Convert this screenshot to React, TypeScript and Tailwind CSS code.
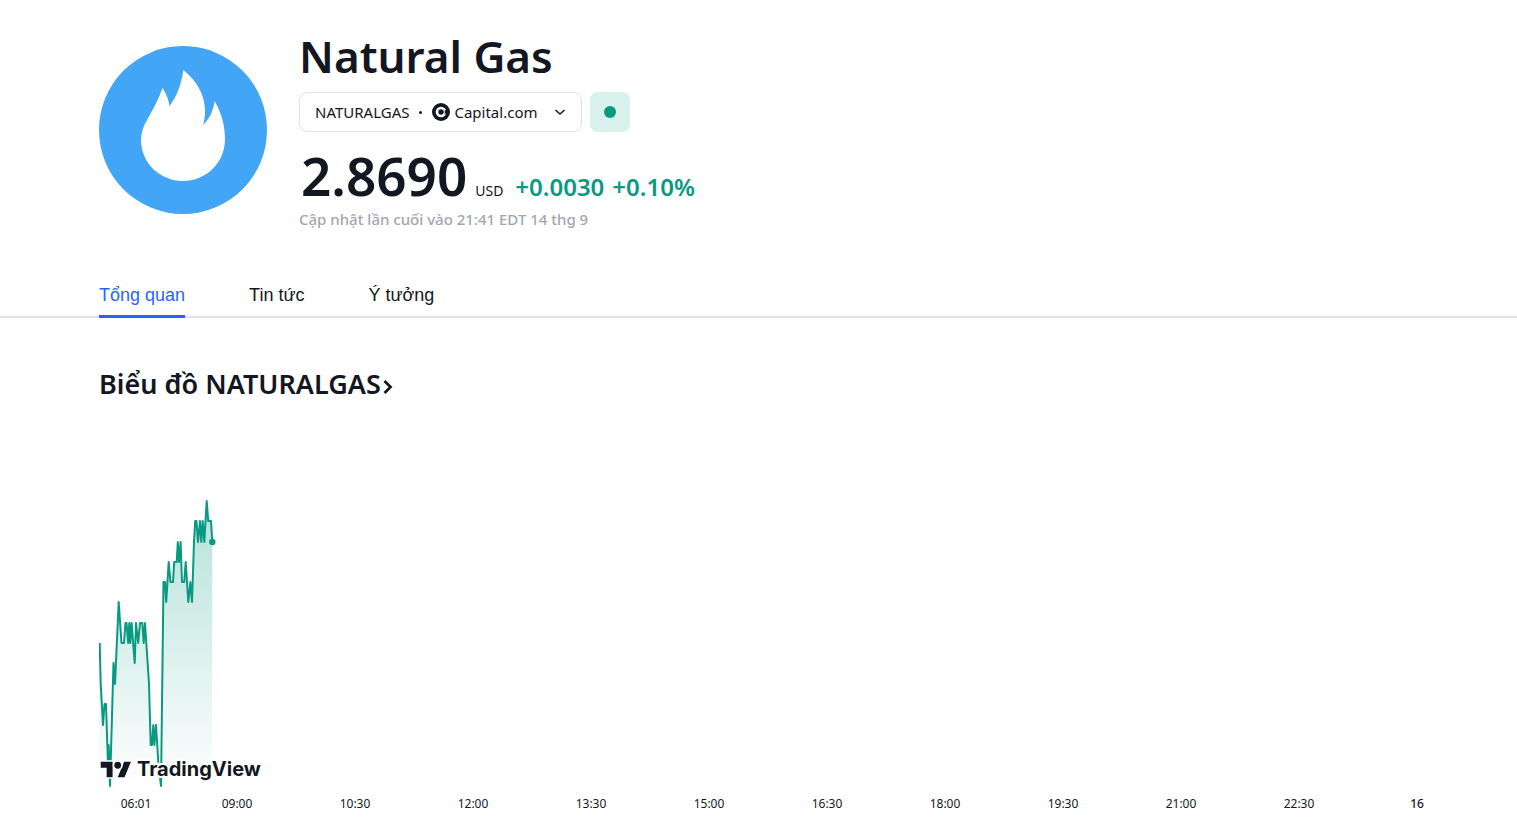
const tabs = [
  { label: 'Tổng quan', href: '#overview', active: true },
  { label: 'Tin tức', href: '#news', active: false },
  { label: 'Ý tưởng', href: '#ideas', active: false },
];

const hours = ['09:00', '10:30', '12:00', '13:30', '15:00', '16:30', '18:00', '19:30', '21:00', '22:30', '16'];

const LINE =
  '0.7,143 1.7,184 4,225 5.5,204 7,204 9,265 9.7,245 11,286 14.5,163 16,184 19.7,102 22.5,143 25,143 26.5,123 27.5,123 29.2,143 30.3,123 31.3,143 32.6,123 35.7,163 37,123 39.2,143 41,123 43.3,123 44.7,143 46,123 50,184 51.7,245 53,245 54.3,225 55.4,245 57,225 59.5,265 62,286 64.5,82 66,82 67.2,102 69.7,62 71.5,82 74,82 75.2,62 77.7,62 78.8,42 80,62 81.6,42 83,82 85.2,82 86.7,62 89.3,102 91.3,82 93,102 95,42 96.2,21 97.5,21 99,42 101,21 102.3,42 103.7,21 105.3,42 107.7,1 109.2,21 112,21 113.3,42';

function GasLogo() {
  return (
    <svg viewBox="0 0 168 168" className="size-[168px] shrink-0" aria-hidden="true">
      <circle cx="84" cy="84" r="84" fill="#42a5f5" />
      <path
        fill="#fff"
        d="M84.300 24C99 36 106 50 106 65C106 70 105.500 74.500 104 79C110 73 114.500 65 115.500 55C123 68 126 80 126 93C126 117 107 135 84 135C61 135 42 117 42 94C42 87 44 81 48 74C54 63 60 53 63.500 42C67 47 69.500 53 70.500 60C78 50 82.500 38 84.300 24Z"
      />
    </svg>
  );
}

function BrokerLogo() {
  return (
    <svg viewBox="0 0 18 18" className="size-[18px]" aria-hidden="true">
      <circle cx="9" cy="9" r="9" fill="#131722" />
      <circle cx="9" cy="9" r="4" fill="none" stroke="#fff" strokeWidth="2.700" />
      <path d="M9 9 15 6.800v4.400z" fill="#131722" />
      <path d="M11 9 13 8v2z" fill="#fff" />
    </svg>
  );
}

function PriceChart() {
  return (
    <svg viewBox="0 0 120 288" className="block h-[288px] w-[120px]" role="img" aria-label="NATURALGAS">
      <defs>
        <linearGradient id="area" x1="0" y1="0" x2="0" y2="288" gradientUnits="userSpaceOnUse">
          <stop offset="0" stopColor="#089981" stopOpacity="0.3" />
          <stop offset="1" stopColor="#089981" stopOpacity="0" />
        </linearGradient>
      </defs>
      <polygon points={`0,288 ${LINE} 113,288`} fill="url(#area)" />
      <polyline points={LINE} fill="none" stroke="#089981" strokeWidth="2" strokeLinejoin="round" />
      <circle cx="113.300" cy="42" r="3.200" fill="#089981" />
    </svg>
  );
}

export default function App() {
  return (
    <div className="min-h-screen bg-white pb-4 font-['Noto_Sans',sans-serif] text-[#131722]">
      <header className="flex gap-8 px-[99px] pt-8">
        <div className="pt-[14px]">
          <GasLogo />
        </div>
        <div>
          <h1 className="text-[44px] leading-[48px] font-semibold">Natural Gas</h1>
          <div className="mt-3 flex gap-2">
            <button
              type="button"
              className="flex h-10 items-center rounded-lg border border-[#e0e3eb] px-[15px] text-[15px] leading-6"
            >
              <span>NATURALGAS</span>
              <span className="mx-2.5 size-[3px] rounded-full bg-[#131722]" />
              <BrokerLogo />
              <span className="ml-1">Capital.com</span>
              <svg viewBox="0 0 12 8" className="ml-[17px] h-2 w-3" fill="none" stroke="#131722" strokeWidth="1.500" aria-hidden="true">
                <path d="M1.500 2 6 6l4.500-4" />
              </svg>
            </button>
            <button
              type="button"
              aria-label="Market open"
              className="flex size-10 items-center justify-center rounded-lg bg-[#d9f1ed]"
            >
              <span className="size-3 rounded-full bg-[#089981]" />
            </button>
          </div>
          <div className="mt-[14px] flex items-baseline pl-0.5">
            <span className="text-[53px] leading-[60px] font-semibold">2.8690</span>
            <span className="ml-2 text-sm leading-6">USD</span>
            <span className="ml-3 flex gap-2 text-2xl leading-6 font-semibold text-[#089981]">
              <span>+0.0030</span>
              <span>+0.10%</span>
            </span>
          </div>
          <p className="mt-px text-[15px] leading-6 font-medium text-[#a3a6af]">
            Cập nhật lần cuối vào 21:41 EDT 14 thg 9
          </p>
        </div>
      </header>

      <nav className="mt-10 flex gap-16 border-b-2 border-[#e0e3eb] px-[99px] font-['Liberation_Sans',Arial,sans-serif] text-lg leading-6">
        {tabs.map((tab) => (
          <a
            key={tab.label}
            href={tab.href}
            className={
              tab.active
                ? '-mb-0.5 border-b-[3px] border-[#2962ff] pt-3 pb-2 text-[#2962ff]'
                : '-mb-0.5 border-b-[3px] border-transparent pt-3 pb-2'
            }
          >
            {tab.label}
          </a>
        ))}
      </nav>

      <main className="pt-12 pr-[41px] pl-[99px]">
        <h2 className="text-[27px] leading-9 font-semibold">
          <a href="#chart" className="inline-flex items-center gap-0.5">
            Biểu đồ NATURALGAS
            <svg viewBox="0 0 10 16" className="mt-1.5 h-4 w-2.5" fill="none" stroke="#131722" strokeWidth="2.800" aria-hidden="true">
              <path d="M1.500 2 7.500 8l-6 6" />
            </svg>
          </a>
        </h2>

        <section className="relative mt-[98px]">
          <PriceChart />
          <a
            href="#tradingview"
            className="absolute bottom-[7px] left-0.5 flex items-center gap-1.5 font-['Inter',sans-serif] text-xl leading-6 font-bold"
          >
            <svg viewBox="-2 2 40 22" className="-m-0.5 h-[19px] w-[34px]" aria-hidden="true">
              <g fill="#131722" stroke="#fff" strokeWidth="4" paintOrder="stroke">
                <path d="M14 22H7V11H0V4h14v18zM28 22h-8l7.500-18h8L28 22z" />
                <circle cx="20" cy="8" r="4" />
              </g>
            </svg>
            <span className="[-webkit-text-stroke:4px_white] [paint-order:stroke_fill]">TradingView</span>
          </a>
        </section>

        <div className="mt-2 grid grid-cols-[79px_repeat(11,minmax(0,1fr))] text-center text-xs leading-4">
          <span className="pr-[5px]">06:01</span>
          {hours.map((hour) => (
            <span key={hour} className={hour === '16' ? 'font-medium' : ''}>
              {hour}
            </span>
          ))}
        </div>
      </main>
    </div>
  );
}
